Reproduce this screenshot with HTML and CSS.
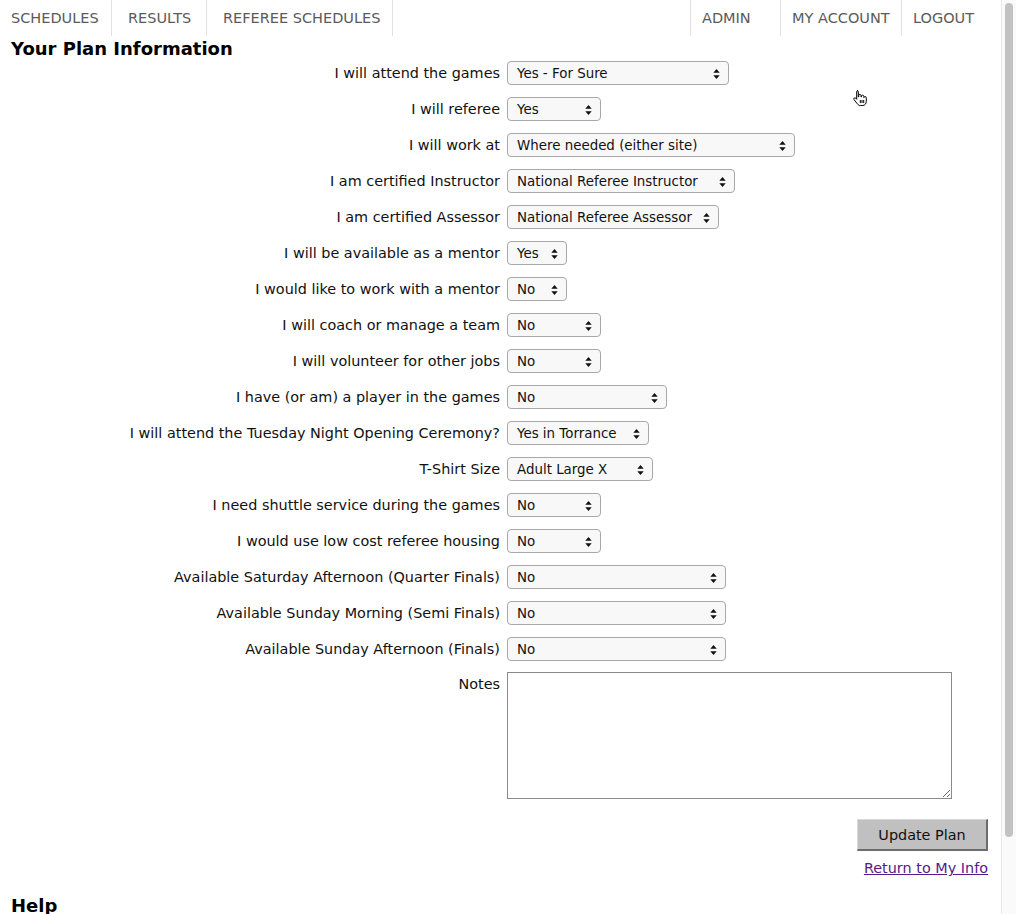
FILE: index.html
```html
<!DOCTYPE html>
<html>
<head>
<meta charset="utf-8">
<title>Your Plan Information</title>
<link rel="stylesheet" href="styles.css">
</head>
<body>
<div class="page">
  <nav class="nav">
    <div class="nav-left">
      <a class="nav-item first w-sched">SCHEDULES</a>
      <a class="nav-item w-results">RESULTS</a>
      <a class="nav-item w-ref">REFEREE SCHEDULES</a>
    </div>
    <div class="nav-right">
      <a class="nav-item r w-admin">ADMIN</a>
      <a class="nav-item r w-acct">MY ACCOUNT</a>
      <a class="nav-item r w-logout">LOGOUT</a>
    </div>
  </nav>

  <h2 class="title">Your Plan Information</h2>

  <form class="plan">
    <label class="lbl">I will attend the games</label>
    <div class="sel w222"><span>Yes - For Sure</span><svg class="arr" viewBox="0 0 7 11"><path d="M3.5 0L7 4.2H0z M3.5 11L0 6.8H7z"/></svg></div>

    <label class="lbl">I will referee</label>
    <div class="sel w94"><span>Yes</span><svg class="arr" viewBox="0 0 7 11"><path d="M3.5 0L7 4.2H0z M3.5 11L0 6.8H7z"/></svg></div>

    <label class="lbl">I will work at</label>
    <div class="sel w288"><span>Where needed (either site)</span><svg class="arr" viewBox="0 0 7 11"><path d="M3.5 0L7 4.2H0z M3.5 11L0 6.8H7z"/></svg></div>

    <label class="lbl">I am certified Instructor</label>
    <div class="sel w228"><span>National Referee Instructor</span><svg class="arr" viewBox="0 0 7 11"><path d="M3.5 0L7 4.2H0z M3.5 11L0 6.8H7z"/></svg></div>

    <label class="lbl">I am certified Assessor</label>
    <div class="sel w212"><span>National Referee Assessor</span><svg class="arr" viewBox="0 0 7 11"><path d="M3.5 0L7 4.2H0z M3.5 11L0 6.8H7z"/></svg></div>

    <label class="lbl">I will be available as a mentor</label>
    <div class="sel w60"><span>Yes</span><svg class="arr" viewBox="0 0 7 11"><path d="M3.5 0L7 4.2H0z M3.5 11L0 6.8H7z"/></svg></div>

    <label class="lbl">I would like to work with a mentor</label>
    <div class="sel w60"><span>No</span><svg class="arr" viewBox="0 0 7 11"><path d="M3.5 0L7 4.2H0z M3.5 11L0 6.8H7z"/></svg></div>

    <label class="lbl">I will coach or manage a team</label>
    <div class="sel w94"><span>No</span><svg class="arr" viewBox="0 0 7 11"><path d="M3.5 0L7 4.2H0z M3.5 11L0 6.8H7z"/></svg></div>

    <label class="lbl">I will volunteer for other jobs</label>
    <div class="sel w94"><span>No</span><svg class="arr" viewBox="0 0 7 11"><path d="M3.5 0L7 4.2H0z M3.5 11L0 6.8H7z"/></svg></div>

    <label class="lbl">I have (or am) a player in the games</label>
    <div class="sel w160"><span>No</span><svg class="arr" viewBox="0 0 7 11"><path d="M3.5 0L7 4.2H0z M3.5 11L0 6.8H7z"/></svg></div>

    <label class="lbl">I will attend the Tuesday Night Opening Ceremony?</label>
    <div class="sel w142"><span>Yes in Torrance</span><svg class="arr" viewBox="0 0 7 11"><path d="M3.5 0L7 4.2H0z M3.5 11L0 6.8H7z"/></svg></div>

    <label class="lbl">T-Shirt Size</label>
    <div class="sel w146"><span>Adult Large X</span><svg class="arr" viewBox="0 0 7 11"><path d="M3.5 0L7 4.2H0z M3.5 11L0 6.8H7z"/></svg></div>

    <label class="lbl">I need shuttle service during the games</label>
    <div class="sel w94"><span>No</span><svg class="arr" viewBox="0 0 7 11"><path d="M3.5 0L7 4.2H0z M3.5 11L0 6.8H7z"/></svg></div>

    <label class="lbl">I would use low cost referee housing</label>
    <div class="sel w94"><span>No</span><svg class="arr" viewBox="0 0 7 11"><path d="M3.5 0L7 4.2H0z M3.5 11L0 6.8H7z"/></svg></div>

    <label class="lbl">Available Saturday Afternoon (Quarter Finals)</label>
    <div class="sel w219"><span>No</span><svg class="arr" viewBox="0 0 7 11"><path d="M3.5 0L7 4.2H0z M3.5 11L0 6.8H7z"/></svg></div>

    <label class="lbl">Available Sunday Morning (Semi Finals)</label>
    <div class="sel w219"><span>No</span><svg class="arr" viewBox="0 0 7 11"><path d="M3.5 0L7 4.2H0z M3.5 11L0 6.8H7z"/></svg></div>

    <label class="lbl">Available Sunday Afternoon (Finals)</label>
    <div class="sel w219"><span>No</span><svg class="arr" viewBox="0 0 7 11"><path d="M3.5 0L7 4.2H0z M3.5 11L0 6.8H7z"/></svg></div>

    <label class="lbl notes-lbl">Notes</label>
    <textarea class="notes"></textarea>
  </form>

  <div class="actions">
    <button class="btn" type="button">Update Plan</button>
    <a class="return" href="#">Return to My Info</a>
  </div>

  <h2 class="title help">Help</h2>
</div>

<div class="scrollbar"><div class="thumb"></div></div>

<svg class="cursor" viewBox="0 0 16 20" width="16" height="20">
  <path d="M5 1.5c.8 0 1.3.6 1.3 1.3V8h.4V6.6c0-.7.6-1.2 1.2-1.2s1.2.5 1.2 1.2V8h.3V7.3c0-.7.6-1.2 1.2-1.2s1.2.5 1.2 1.2V8.5h.3c0-.6.5-1 1.1-1s1.1.5 1.1 1.1v3.7c0 2.3-1.4 4.2-3.5 4.2H8.3c-1.3 0-2.1-.6-2.9-1.6L2 10.6c-.4-.5-.3-1.2.2-1.6.5-.4 1.2-.3 1.6.2l.9 1.1V2.8c0-.7.5-1.300 1.3-1.3z" fill="#fff" stroke="#000" stroke-width="1"/>
  <path d="M8.3 11v3M10 11v3M11.7 11v3" stroke="#000" stroke-width="1"/>
</svg>
</body>
</html>
```
FILE: styles.css
```css
html, body {
  margin: 0;
  padding: 0;
  overflow: hidden;
  background: #fff;
}
body {
  font-family: "DejaVu Sans", Verdana, sans-serif;
  font-size: 14.4px;
  color: #111;
}
.page {
  width: 1001px;
}
.nav {
  display: flex;
  justify-content: space-between;
  height: 36px;
}
.nav-left, .nav-right {
  display: flex;
}
.nav-item {
  display: flex;
  align-items: center;
  box-sizing: border-box;
  height: 36px;
  padding-left: 16px;
  color: #5a5a5a;
  font-size: 14.5px;
  text-decoration: none;
  white-space: nowrap;
  border-right: 1px solid #e6e0e0;
}
.nav-item.first { padding-left: 11px; }
.nav-item.r {
  border-right: none;
  border-left: 1px solid #e6e0e0;
  padding-left: 11px;
}
.w-sched { width: 112px; }
.w-results { width: 95px; }
.w-ref { width: 186px; }
.w-admin { width: 90px; }
.w-acct { width: 121px; }
.w-logout { width: 100px; }

.title {
  margin: 2px 0 0 11px;
  font-size: 18px;
  font-weight: bold;
  color: #000;
  line-height: 22px;
}
.plan {
  display: grid;
  grid-template-columns: 500px 1fr;
  column-gap: 7px;
  row-gap: 12px;
  grid-auto-rows: minmax(24px, auto);
  margin-top: 1px;
  align-items: center;
}
.lbl {
  text-align: right;
  color: #111;
  white-space: nowrap;
}
.sel {
  position: relative;
  box-sizing: border-box;
  height: 24px;
  border: 1px solid #a8a8a8;
  border-radius: 4px;
  background: #f8f8f8;
  padding-left: 9px;
  display: flex;
  align-items: center;
  color: #111;
  font-size: 13.4px;
  white-space: nowrap;
  overflow: hidden;
}
.arr {
  position: absolute;
  right: 8px;
  top: 7px;
  width: 7px;
  height: 10px;
  fill: #111;
}
.w60 { width: 60px; }
.w94 { width: 94px; }
.w142 { width: 142px; }
.w146 { width: 146px; }
.w160 { width: 160px; }
.w212 { width: 212px; }
.w219 { width: 219px; }
.w222 { width: 222px; }
.w228 { width: 228px; }
.w288 { width: 288px; }

.notes-lbl {
  align-self: start;
  margin-top: 3px;
}
.notes {
  align-self: start;
  box-sizing: border-box;
  width: 445px;
  height: 127px;
  margin: 0;
  margin-top: -1px;
  border: 1px solid #8a8a8a;
  background: #fff;
  resize: both;
  font-family: inherit;
}
.actions {
  display: flex;
  flex-direction: column;
  align-items: flex-end;
  padding-right: 13px;
  margin-top: 20px;
}
.btn {
  box-sizing: border-box;
  width: 131px;
  height: 32px;
  background: #c0c0c0;
  border: 1px solid;
  border-color: #d8d8d8 #6c6c6c #6c6c6c #d8d8d8;
  border-width: 1px 2px 2px 1px;
  font-family: inherit;
  font-size: 14.4px;
  color: #111;
  padding: 0;
}
.return {
  margin-top: 9px;
  color: #551a8b;
  text-decoration: underline;
  font-size: 14.4px;
}
.help {
  margin-top: 19px;
}
.scrollbar {
  position: fixed;
  top: 0;
  right: 0;
  width: 15px;
  height: 100%;
  background: #fafafa;
  border-left: 1px solid #e8e8e8;
  box-sizing: border-box;
}
.thumb {
  position: absolute;
  left: 3px;
  top: 3px;
  width: 8px;
  height: 834px;
  border-radius: 4px;
  background: #c2c2c2;
}
.cursor {
  position: fixed;
  left: 852px;
  top: 89px;
}
```
